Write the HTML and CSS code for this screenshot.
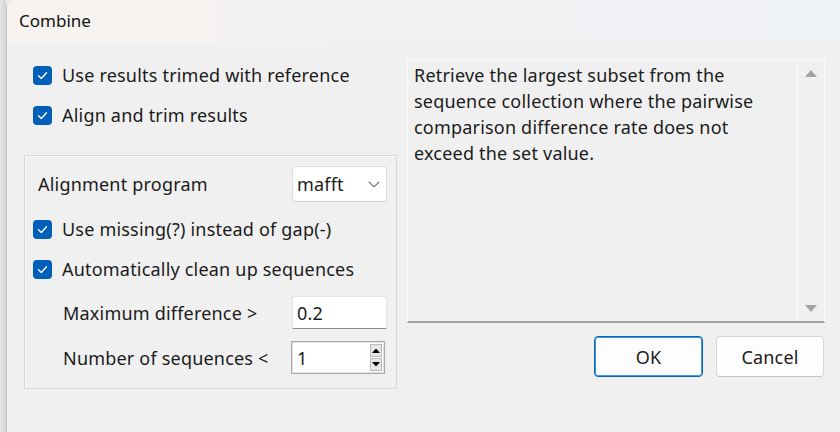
FILE: index.html
```html
<!DOCTYPE html>
<html>
<head>
<meta charset="utf-8">
<link rel="stylesheet" href="styles.css">
</head>
<body>
<div class="screen">
  <div class="behind"></div>
  <div class="dialog">
    <div class="titlebar">Combine</div>
    <div class="main">
      <div class="left">
        <div class="check-row top">
          <span class="cb"><svg viewBox="0 0 19 19" width="19" height="19"><polyline points="5.5,9.8 8.3,12.4 13.5,6.8" fill="none" stroke="#fff" stroke-width="1.4" stroke-linecap="round" stroke-linejoin="round"/></svg></span>
          <span>Use results trimed with reference</span>
        </div>
        <div class="check-row top">
          <span class="cb"><svg viewBox="0 0 19 19" width="19" height="19"><polyline points="5.5,9.8 8.3,12.4 13.5,6.8" fill="none" stroke="#fff" stroke-width="1.4" stroke-linecap="round" stroke-linejoin="round"/></svg></span>
          <span>Align and trim results</span>
        </div>
        <div class="group">
          <div class="field-row prog">
            <span class="lbl-prog">Alignment program</span>
            <div class="combo"><span>mafft</span><svg viewBox="0 0 12 7" width="12" height="7"><polyline points="0.8,0.8 6,5.8 11.2,0.8" fill="none" stroke="#606060" stroke-width="1.1"/></svg></div>
          </div>
          <div class="check-row">
            <span class="cb"><svg viewBox="0 0 19 19" width="19" height="19"><polyline points="5.5,9.8 8.3,12.4 13.5,6.8" fill="none" stroke="#fff" stroke-width="1.4" stroke-linecap="round" stroke-linejoin="round"/></svg></span>
            <span>Use missing(?) instead of gap(-)</span>
          </div>
          <div class="check-row">
            <span class="cb"><svg viewBox="0 0 19 19" width="19" height="19"><polyline points="5.5,9.8 8.3,12.4 13.5,6.8" fill="none" stroke="#fff" stroke-width="1.4" stroke-linecap="round" stroke-linejoin="round"/></svg></span>
            <span>Automatically clean up sequences</span>
          </div>
          <div class="field-row diff">
            <span class="lbl-sub">Maximum difference &gt;</span>
            <div class="textbox">0.2</div>
          </div>
          <div class="field-row num">
            <span class="lbl-sub">Number of sequences &lt;</span>
            <div class="spin">
              <span class="spin-val">1</span>
              <div class="spin-btns">
                <span class="sb"><svg viewBox="0 0 8 5" width="8" height="5"><polygon points="0,5 4,0.5 8,5" fill="#000"/></svg></span>
                <span class="sb"><svg viewBox="0 0 8 5" width="8" height="5"><polygon points="0,0 4,4.5 8,0" fill="#000"/></svg></span>
              </div>
            </div>
          </div>
        </div>
      </div>
      <div class="right">
        <div class="desc">
          <div class="desc-text">Retrieve the largest subset from the sequence collection where the pairwise comparison difference rate does not exceed the set value.</div>
          <div class="scroll">
            <svg viewBox="0 0 12 7" width="12" height="7"><polygon points="0,7 6,0 12,7" fill="#a3a3a3"/></svg>
            <svg viewBox="0 0 12 7" width="12" height="7"><polygon points="0,0 6,7 12,0" fill="#a3a3a3"/></svg>
          </div>
        </div>
        <div class="buttons">
          <div class="btn ok">OK</div>
          <div class="btn">Cancel</div>
        </div>
      </div>
    </div>
  </div>
</div>
</body>
</html>
```
FILE: styles.css
```css
* { box-sizing: border-box; }
html, body { margin: 0; padding: 0; }
body {
  width: 840px;
  height: 432px;
  overflow: hidden;
  background: #f0f0f0;
  font-family: "Noto Sans", "Open Sans", sans-serif;
  font-size: 18px;
  letter-spacing: 0.2px;
  color: #1b1b1b;
}
.screen {
  display: flex;
  width: 840px;
  height: 432px;
}
.behind {
  width: 6px;
  flex: none;
  background: linear-gradient(to right, #e6e6e6, #d4d4d4);
}
.dialog {
  flex: 1;
  display: flex;
  flex-direction: column;
  background: #f0f0f0;
  border-left: 1px solid #c4c4c4;
  border-top-left-radius: 8px;
  overflow: hidden;
}
.titlebar {
  height: 43px;
  flex: none;
  padding-left: 12px;
  display: flex;
  align-items: center;
  font-size: 17px;
  letter-spacing: 0;
  color: #111;
  background: linear-gradient(to right, #f8f3ee 0%, #f2f1f1 40%, #eef1f6 100%);
  padding-bottom: 3px;
}
.main {
  display: flex;
  gap: 10px;
  padding: 12px 14px 0 17px;
}
.left {
  width: 373px;
  flex: none;
}
.right {
  width: 418px;
  flex: none;
  padding-top: 4px;
}
.check-row {
  display: flex;
  align-items: center;
  gap: 10px;
  height: 40px;
  padding-left: 9px;
}
.group .check-row { padding-left: 8px; }
.cb {
  width: 19px;
  height: 19px;
  flex: none;
  border-radius: 4px;
  background: #005fb8;
  display: flex;
}
.group {
  margin-top: 20px;
  height: 234px;
  border: 1px solid #d9d9d9;
  box-shadow: inset 1px 1px 0 #fbfbfb;
  padding: 10px 9px 0 0;
  display: flex;
  flex-direction: column;
}
.field-row {
  display: flex;
  align-items: center;
  justify-content: space-between;
}
.prog { margin-bottom: 7px; }
.lbl-prog { padding-left: 13px; }
.lbl-sub { padding-left: 38px; }
.combo {
  width: 95px;
  height: 36px;
  background: #fff;
  border: 1px solid #dcdcdc;
  border-bottom-color: #cfcfcf;
  border-radius: 4px;
  display: flex;
  align-items: center;
  justify-content: space-between;
  padding: 0 6px 0 4px;
}
.diff { margin-top: 7px; }
.textbox {
  width: 95px;
  height: 33px;
  background: #fff;
  border: 1px solid #e3e3e3;
  border-bottom: 1px solid #8c8c8c;
  border-radius: 3px 3px 0 0;
  display: flex;
  align-items: center;
  padding-left: 4px;
}
.num { margin-top: 12px; }
.num .spin { margin-right: 2px; }
.spin {
  width: 94px;
  height: 33px;
  background: #fff;
  border: 1px solid #a9a9a9;
  box-shadow: inset 0 0 0 1px #e2e2e2;
  display: flex;
  align-items: center;
  justify-content: space-between;
  padding: 0 2px 0 5px;
}
.spin-btns {
  display: flex;
  flex-direction: column;
  gap: 1px;
}
.sb {
  width: 12px;
  height: 13px;
  background: #e8e8e8;
  border: 1px solid #b8b8b8;
  display: flex;
  align-items: center;
  justify-content: center;
}
.desc {
  height: 264px;
  display: flex;
  background: #f0f0f0;
  border: 1px solid #fbfbfb;
  border-bottom: 2px solid #a2a2a2;
}
.desc-text {
  flex: 1;
  padding: 2px 6px 0 6px;
  line-height: 26px;
}
.scroll {
  width: 27px;
  flex: none;
  border-left: 1px solid #fbfbfb;
  display: flex;
  flex-direction: column;
  justify-content: space-between;
  align-items: center;
  padding: 10px 0 9px 0;
}
.buttons {
  display: flex;
  justify-content: flex-end;
  gap: 13px;
  margin-top: 13px;
  padding-right: 1px;
}
.btn {
  width: 108px;
  height: 41px;
  background: #fdfdfd;
  border: 1px solid #d6d6d6;
  border-bottom-color: #c3c3c3;
  border-radius: 4px;
  display: flex;
  align-items: center;
  justify-content: center;
}
.btn.ok {
  width: 109px;
  border: 1px solid #0067c0;
  box-shadow: inset 0 0 0 1px #4c94d8;
}
```
